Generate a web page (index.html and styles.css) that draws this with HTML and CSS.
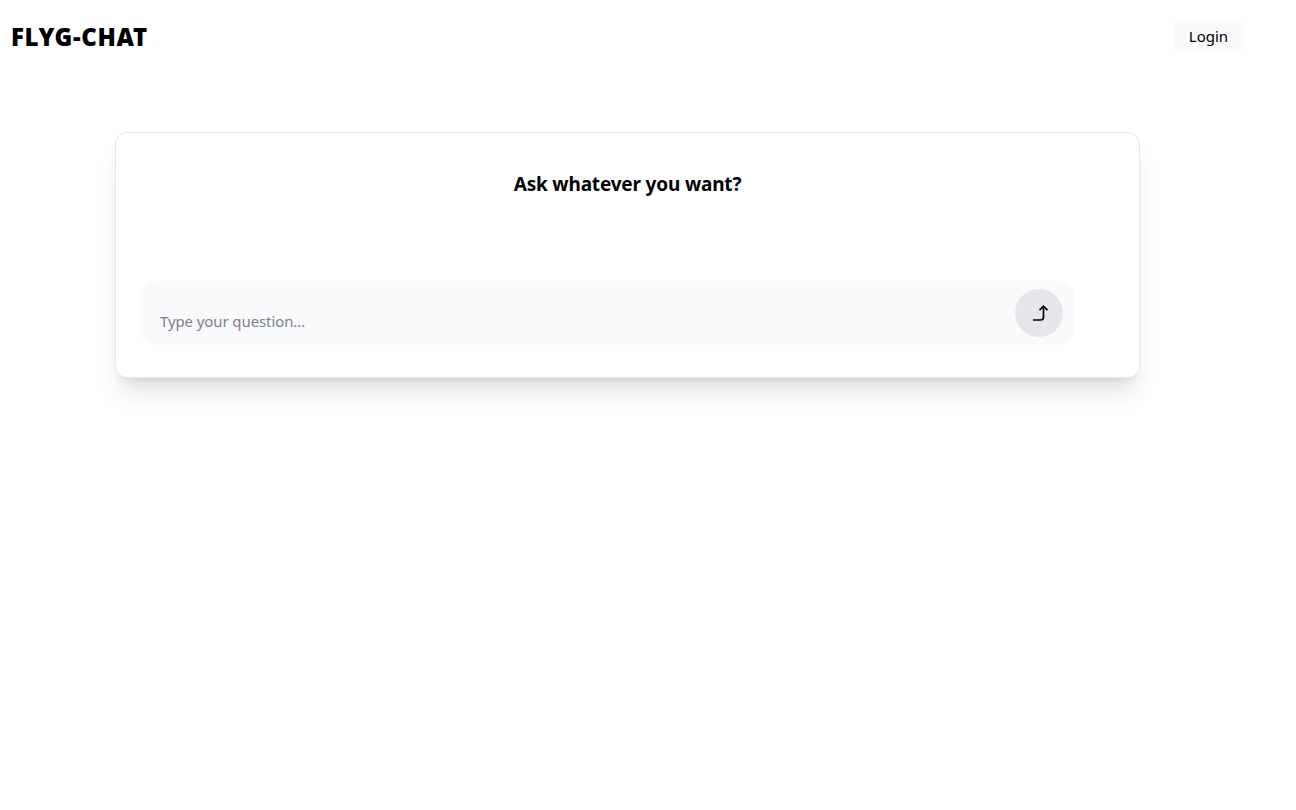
FILE: index.html
```html
<!DOCTYPE html>
<html lang="en">
<head>
    <meta charset="UTF-8">
    <meta name="viewport" content="width=device-width, initial-scale=1.0">
    <title>Flyg-Chat</title>
    <link rel="stylesheet" href="styles.css">
</head>
<body>
    <header class="topbar">
        <h1 class="logo">FLYG-CHAT</h1>
        <button class="login-btn">Login</button>
    </header>
    <main class="chat-card">
        <h2 class="chat-title">Ask whatever you want?</h2>
        <form class="ask-bar">
            <input class="ask-input" type="text" placeholder="Type your question...">
            <button class="send-btn" type="button" aria-label="Send">
                <svg width="20" height="20" viewBox="0 0 20 20" fill="none" stroke="#000" stroke-width="1.7">
                    <path d="M4 17h7.5q3 0 3-3V3.5"/>
                    <path d="M10.5 7.2 14.5 3.2l4 4"/>
                </svg>
            </button>
        </form>
    </main>
</body>
</html>
```

FILE: styles.css
```css
body {
    margin: 0;
    min-height: 100vh;
    background-color: #fff;
    color: #000;
    font-family: "Noto Sans", "Open Sans", sans-serif;
}
.topbar {
    display: flex;
    justify-content: space-between;
    align-items: center;
    height: 32px;
    padding: 20px 52px 20px 11px;
}
.logo {
    margin: 2px 0 0;
    font-size: 24px;
    font-weight: 900;
    line-height: 32px;
    letter-spacing: 0.65px;
}
.login-btn {
    width: 71px;
    height: 32px;
    padding: 0;
    border: none;
    border-radius: 8px;
    background-color: #f9fafb;
    color: #000;
    font-family: inherit;
    font-size: 15px;
    cursor: pointer;
}
.chat-card {
    box-sizing: border-box;
    width: 1025px;
    height: 246px;
    margin: 60px 0 0 115px;
    padding: 37px 24px 32px;
    border: 1px solid #e5e7eb;
    border-radius: 12px;
    background-color: #fff;
    box-shadow: 0 20px 25px -5px rgba(0, 0, 0, 0.1), 0 8px 10px -6px rgba(0, 0, 0, 0.1);
}
.chat-title {
    margin: 0 0 83px;
    height: 28px;
    font-size: 19px;
    font-weight: 700;
    line-height: 28px;
    letter-spacing: -0.18px;
    text-align: center;
}
.ask-bar {
    display: flex;
    align-items: center;
    justify-content: space-between;
    width: 935px;
    height: 64px;
    box-sizing: border-box;
    padding: 0 12px 0 20px;
    border-radius: 16px;
    background-color: #f9fafb;
}
.ask-input {
    flex: 1;
    align-self: flex-end;
    height: 24px;
    margin-bottom: 12px;
    padding: 0;
    border: none;
    outline: none;
    background: transparent;
    font-family: inherit;
    font-size: 15px;
    letter-spacing: -0.1px;
}
.ask-input::placeholder {
    color: #7b818c;
}
.send-btn {
    display: flex;
    align-items: center;
    justify-content: center;
    width: 48px;
    height: 48px;
    padding: 0;
    border: none;
    border-radius: 50%;
    background-color: #e5e7eb;
    cursor: pointer;
}
```
